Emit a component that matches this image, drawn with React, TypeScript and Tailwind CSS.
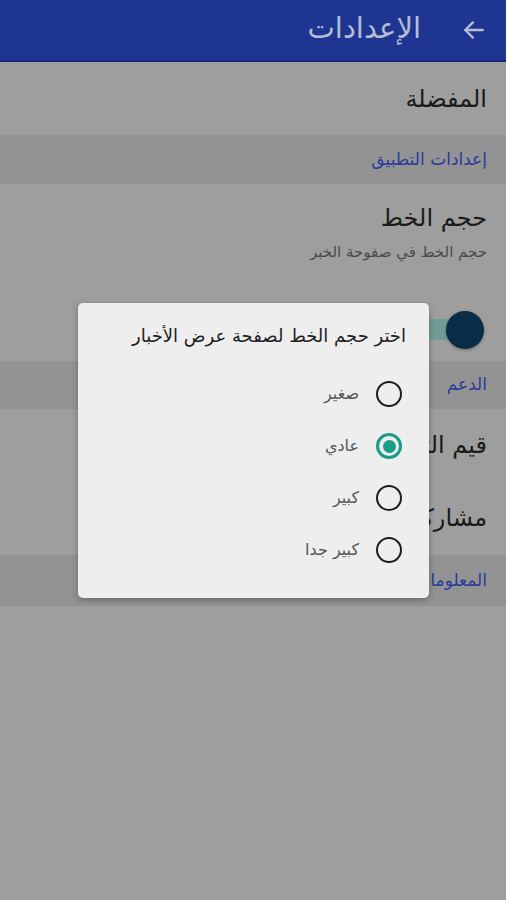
import React from "react";

function Radio({ checked }: { checked?: boolean }) {
  return checked ? (
    <div className="w-[26px] h-[26px] rounded-full border-[3px] border-[#1a9c8a] flex items-center justify-center">
      <div className="w-[13px] h-[13px] rounded-full bg-[#1a9c8a]" />
    </div>
  ) : (
    <div className="w-[26px] h-[26px] rounded-full border-[2.5px] border-[#1c1c1c]" />
  );
}

function Section({ label, h }: { label: string; h: string }) {
  return (
    <div className={`${h} bg-[#939393] flex items-center pr-[19px]`}>
      <span className="text-[17px] text-[#2a3a9c]">{label}</span>
    </div>
  );
}

export default function App() {
  const options = [
    { label: "صغير", checked: false },
    { label: "عادي", checked: true },
    { label: "كبير", checked: false },
    { label: "كبير جدا", checked: false },
  ];
  return (
    <div
      dir="rtl"
      className="relative w-[506px] h-[900px] bg-[#9e9e9e] overflow-hidden font-['DejaVu_Sans','Noto_Sans',sans-serif]"
    >
      <div className="h-[62px] bg-[#1f3592] border-b-[2px] border-[#15297d] flex items-center pr-[19px] gap-[40px]">
        <svg width="26" height="26" viewBox="0 0 24 24" fill="none" stroke="#b6bcd3" strokeWidth="2.2" strokeLinecap="round" strokeLinejoin="round">
          <path d="M20 12H4" />
          <path d="M11 5l-7 7 7 7" />
        </svg>
        <span className="text-[29px] text-[#b6bcd3] leading-none pb-[4px]">الإعدادات</span>
      </div>

      <div className="h-[73px] flex items-center pr-[19px]">
        <span className="text-[24px] text-[#1a1a1a]">المفضلة</span>
      </div>

      <Section label="إعدادات التطبيق" h="h-[49px]" />

      <div className="h-[114px] flex flex-col pr-[19px] pt-[16px]">
        <span className="text-[24px] text-[#1a1a1a] leading-[36px]">حجم الخط</span>
        <span className="text-[15px] text-[#4a4a4a] leading-[20px] mt-[6px]">حجم الخط في صفوحة الخبر</span>
      </div>

      <div className="h-[63px] flex items-center pr-[22px]">
        <div className="relative w-[66px] h-[40px] flex items-center">
          <div className="absolute left-0 right-[10px] h-[21px] rounded-full bg-[#729b95]" />
          <div className="absolute right-0 w-[38px] h-[38px] rounded-full bg-[#0b2c47] shadow-[0_1px_3px_rgba(0,0,0,0.35)]" />
        </div>
      </div>

      <Section label="الدعم" h="h-[48px]" />

      <div className="h-[72px] flex items-center pr-[19px]">
        <span className="text-[24px] text-[#1a1a1a]">قيم التطبيق</span>
      </div>
      <div className="h-[74px] flex items-center pr-[19px]">
        <span className="text-[24px] text-[#1a1a1a]">مشاركة التطبيق</span>
      </div>

      <Section label="المعلومات" h="h-[51px]" />

      <div className="absolute left-[78px] top-[303px] w-[351px] h-[295px] bg-[#eeeeee] rounded-[5px] shadow-[0_2px_6px_rgba(0,0,0,0.3)] flex flex-col">
        <div className="h-[64px] flex items-center pr-[23px]">
          <span className="text-[18px] text-[#1e1e1e]">اختر حجم الخط لصفحة عرض الأخبار</span>
        </div>
        <div className="flex flex-col pt-[1px]">
          {options.map((o) => (
            <div key={o.label} className="h-[52px] flex items-center pr-[27px] gap-[17px]">
              <Radio checked={o.checked} />
              <span className="text-[16px] text-[#555555]">{o.label}</span>
            </div>
          ))}
        </div>
      </div>
    </div>
  );
}
